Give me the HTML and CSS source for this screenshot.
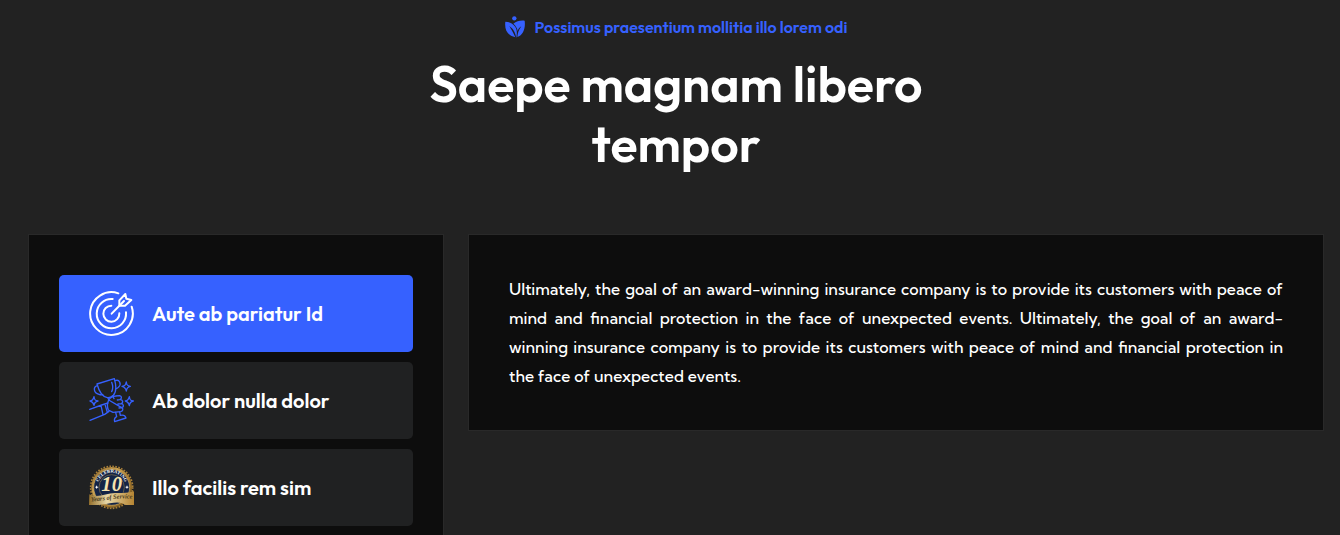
FILE: index.html
```html
<!DOCTYPE html>
<html lang="en">
<head>
<meta charset="utf-8">
<meta name="viewport" content="width=device-width, initial-scale=1">
<title>Saepe magnam libero tempor</title>
<link rel="stylesheet" href="styles.css">
</head>
<body>
<main class="section">
  <header class="heading">
    <p class="eyebrow">
      <svg class="eyebrow-icon" viewBox="15 17 58 66" aria-hidden="true">
        <circle cx="42" cy="24" r="6.500"/>
        <path d="M15 34c13 0 23 6 30 16 6 10 5 20 3 33-3-17-9-27-21-36 5 10 12 19 18 34C21 76 12 58 15 34z"/>
        <path d="M73 31c3 22-4 43-22 49 1-12 4-20 12-32-6 4-9 8-11 14-1-8-6-16-13-22 10-8 20-10 34-9z"/>
      </svg>
      <span>Possimus praesentium mollitia illo lorem odi</span>
    </p>
    <h1 class="title">Saepe magnam libero tempor</h1>
  </header>
  <div class="columns">
    <div class="tabs" role="tablist" aria-label="Topics">
      <button class="tab tab-active" type="button" role="tab" id="tab-one" aria-selected="true" aria-controls="panel">
        <svg class="tab-icon line-icon" viewBox="27 33 135 135" aria-hidden="true">
          <g stroke-width="6">
            <path d="M115 40A64 64 0 1 0 155 80"/>
            <path d="M98 57A44 44 0 1 0 138 97"/>
            <path d="M94 77A24 24 0 1 0 118 100"/>
            <path d="M95 101L132 63"/>
            <path d="M118 77V61L136 42L139 56L154 60L135 77Z"/>
          </g>
        </svg>
        <span>Aute ab pariatur Id</span>
      </button>
      <button class="tab" type="button" role="tab" aria-selected="false" aria-controls="panel">
        <svg class="tab-icon line-icon blue-icon" viewBox="27 30 135 135" aria-hidden="true">
          <g stroke-width="4">
            <path d="M51 48L103 32C108 50 112 70 100 82C93 88 88 90 82 89C66 86 57 70 51 48Z"/>
            <path d="M52 53C39 56 40 75 57 79C62 81 65 81 68 80"/>
            <path d="M105 38C119 33 125 48 116 57C114 60 112 61 108 62"/>
            <path d="M95 43C99 53 99 64 95 71M84 90L87 97M98 84L102 92"/>
            <path d="M86 96C91 88 99 84 107 84L119 83C127 85 125 94 119 95L112 96M119 95C129 94 131 105 123 107L114 108M123 107C131 107 133 117 125 119L117 120M125 119C131 122 129 130 122 131L99 133L85 126C80 114 82 105 86 96Z"/>
            <path d="M29 124L65 111L84 105M30 157L74 139L87 130M63 113L69 140M75 109L82 133"/>
            <path d="M107 133L110 146M119 132L121 142M110 146C104 149 102 154 104 161L138 150C136 143 130 140 121 142"/>
            <path d="M139 42C140 51 142 54 151 55C142 57 140 60 139 69C137 60 135 57 126 55C135 54 137 51 139 42Z"/>
            <path d="M148 86C149 95 151 98 160 99C151 101 149 104 148 113C146 104 144 101 136 99C144 98 146 95 148 86Z"/>
            <path d="M42 86C43 95 45 98 54 99C45 101 43 104 42 112C40 104 38 101 30 99C38 98 40 95 42 86Z"/>
          </g>
        </svg>
        <span>Ab dolor nulla dolor</span>
      </button>
      <button class="tab" type="button" role="tab" aria-selected="false" aria-controls="panel">
        <svg class="tab-icon" viewBox="27 30 135 135" aria-hidden="true">
          <defs>
            <linearGradient id="gold" x1="0" y1="0" x2="1" y2="1">
              <stop offset="0" stop-color="#8a6428"/>
              <stop offset=".35" stop-color="#c9a050"/>
              <stop offset=".6" stop-color="#a87b30"/>
              <stop offset="1" stop-color="#705018"/>
            </linearGradient>
            <linearGradient id="ribbon">
              <stop offset="0" stop-color="#94702c"/>
              <stop offset=".4" stop-color="#e8d8a8"/>
              <stop offset="1" stop-color="#b58432"/>
            </linearGradient>
            <path id="arc" d="M55 103A41 41 0 1 1 135 103"/>
            <path id="band" d="M28 140Q64 138 94 133T162 132"/>
          </defs>
          <circle cx="95" cy="97" r="61" fill="url(#gold)"/>
          <circle cx="95" cy="97" r="63" fill="none" stroke="#a87f38" stroke-width="5" stroke-dasharray="5 4"/>
          <circle cx="95" cy="97" r="54" fill="#142446" stroke="#d6b062" stroke-width="2"/>
          <circle cx="95" cy="97" r="38" fill="#142446" stroke="#8b7548" stroke-width="2"/>
          <text class="badge-arc"><textPath href="#arc" startOffset="50%" text-anchor="middle">CELEBRATING</textPath></text>
          <text class="badge-number" x="95" y="109" text-anchor="middle">10</text>
          <path d="M50 91l2 4 4 1-4 2-2 4-2-4-4-2 4-1zM141 91l2 4 4 1-4 2-2 4-2-4-4-2 4-1z" fill="#fff"/>
          <path d="M28 118C52 131 79 114 105 114C126 113 144 116 162 109V150H137C120 140 108 142 90 145C72 149 51 151 27 150Z" fill="url(#ribbon)"/>
          <text class="badge-ribbon"><textPath href="#band" startOffset="50%" text-anchor="middle">Years of Service</textPath></text>
        </svg>
        <span>Illo facilis rem sim</span>
      </button>
    </div>
    <section class="panel" id="panel" role="tabpanel" aria-labelledby="tab-one">
      <p class="panel-text">Ultimately, the goal of an award-winning insurance company is to provide its customers with peace of mind and financial protection in the face of unexpected events. Ultimately, the goal of an award-winning insurance company is to provide its customers with peace of mind and financial protection in the face of unexpected events.</p>
    </section>
  </div>
</main>
</body>
</html>
```
FILE: styles.css
```css
* {
  box-sizing: border-box;
}

body {
  margin: 0;
  background: #222;
  color: #fff;
  font-family: Outfit, Lato, sans-serif;
}

.section {
  height: 100vh;
  overflow: hidden;
  padding: 12px 16px 0 28px;
}

.heading {
  display: flex;
  flex-direction: column;
  align-items: center;
  gap: 12px;
  margin-bottom: 60px;
  text-align: center;
}

.eyebrow {
  display: flex;
  align-items: center;
  gap: 10px;
  margin: 0;
  color: #3661ff;
  font-size: 16px;
  font-weight: 600;
  line-height: 30px;
}

.eyebrow-icon {
  width: 20px;
  height: 22px;
  fill: #3661ff;
}

.title {
  max-width: 600px;
  margin: 0;
  font-size: 50px;
  font-weight: 600;
  line-height: 60px;
}

.columns {
  display: grid;
  grid-template-columns: repeat(12, 1fr);
  gap: 24px;
  align-items: start;
}

.tabs,
.panel {
  border: 1px solid #292929;
  background: #0d0d0d;
}

.tabs {
  grid-column: span 4;
  display: flex;
  flex-direction: column;
  gap: 10px;
  padding: 40px 30px;
}

.tab {
  display: flex;
  align-items: center;
  gap: 18px;
  padding: 16px 30px;
  border: 0;
  border-radius: 5px;
  background: #202122;
  color: #fff;
  font-family: inherit;
  font-size: 20px;
  font-weight: 600;
  line-height: 26px;
  text-align: left;
}

.tab-active {
  background: #3661ff;
}

.tab-icon {
  flex: none;
  width: 45px;
  height: 45px;
}

.line-icon {
  fill: none;
  stroke: #fff;
  stroke-linecap: round;
  stroke-linejoin: round;
}

.blue-icon {
  stroke: #3661ff;
}

.badge-arc {
  fill: #fff;
  font: 700 14px "Liberation Serif", serif;
}

.badge-number {
  fill: #f5e2ae;
  font: italic 700 62px "Liberation Serif", serif;
}

.badge-ribbon {
  fill: #4a3c20;
  font: italic 700 19px "Liberation Serif", serif;
}

.panel {
  grid-column: span 8;
  padding: 40px 40px 39px;
}

.panel-text {
  margin: 0;
  font-family: "Kumbh Sans", Lato, sans-serif;
  font-size: 16px;
  font-weight: 500;
  line-height: 29px;
  text-align: justify;
}
```
